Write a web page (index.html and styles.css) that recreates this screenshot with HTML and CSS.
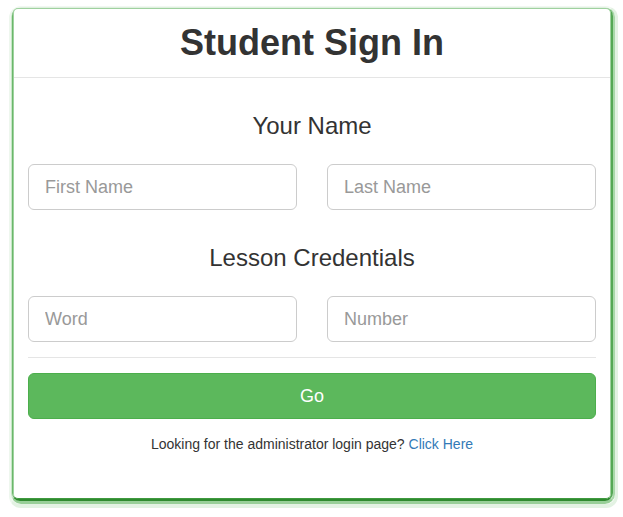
FILE: index.html
```html
<!DOCTYPE html>
<html>
<head>
<meta charset="utf-8">
<link rel="stylesheet" href="styles.css">
</head>
<body>
<div class="glow glow-outer">
  <div class="glow glow-mid">
    <div class="glow glow-inner">
      <div class="card">
        <div class="card-header">
          <h1 class="title">Student Sign In</h1>
        </div>
        <div class="card-body">
          <h3 class="section-title">Your Name</h3>
          <div class="row">
            <input class="field" type="text" placeholder="First Name">
            <input class="field" type="text" placeholder="Last Name">
          </div>
          <h3 class="section-title">Lesson Credentials</h3>
          <div class="row">
            <input class="field" type="text" placeholder="Word">
            <input class="field" type="text" placeholder="Number">
          </div>
          <hr class="divider">
          <button class="go-btn" type="button">Go</button>
          <p class="admin">Looking for the administrator login page? <a class="admin-link" href="#">Click Here</a></p>
        </div>
      </div>
    </div>
  </div>
</div>
</body>
</html>
```
FILE: styles.css
```css
* { box-sizing: border-box; }
html { background: #fff; }
body {
  margin: 6px 5px 0 9px;
  font-family: "Liberation Sans", Arial, sans-serif;
  font-size: 14px;
  line-height: 20px;
  color: #333;
}
.glow { border-style: solid; }
.glow-outer {
  border-width: 1px 3px 4px 2px;
  border-color: #f1f8f1 #e3f2e3 #e3f2e3 #eef7ee;
  border-radius: 12px;
}
.glow-mid {
  border-width: 1px 2px 3px 1px;
  border-color: #e0f0e0 #a9d8a9 #98cf98 #c6e6c6;
  border-radius: 10px;
}
.glow-inner {
  border-width: 0 2px 2px 1px;
  border-color: #6bb86b #55a855 #2f8a2f #6bb86b;
  border-radius: 8px;
}
.card {
  border: 1px solid #9fd19f;
  border-bottom-color: #3f9a3f;
  border-radius: 5px;
  background: #fff;
  height: 491px;
}
.card-header {
  border-bottom: 1px solid #e5e5e5;
  padding: 14px 15px;
  text-align: center;
}
.title {
  margin: 0;
  font-size: 36px;
  line-height: 40px;
  font-weight: bold;
  color: #333;
}
.card-body {
  padding: 0 14px 15px;
}
.section-title {
  margin: 35px 0 25px;
  font-size: 24px;
  line-height: 26px;
  font-weight: 500;
  text-align: center;
  color: #333;
}
.row {
  display: grid;
  grid-template-columns: 1fr 1fr;
  column-gap: 30px;
}
.field {
  height: 46px;
  padding: 10px 16px;
  font-family: "Liberation Sans", Arial, sans-serif;
  font-size: 18px;
  color: #555;
  border: 1px solid #ccc;
  border-radius: 6px;
  background: #fff;
  width: 100%;
}
.field::placeholder { color: #999; }
.divider {
  margin: 15px 0;
  border: 0;
  border-top: 1px solid #e5e5e5;
}
.go-btn {
  display: block;
  width: 100%;
  height: 46px;
  font-family: "Liberation Sans", Arial, sans-serif;
  font-size: 18px;
  color: #fff;
  background: #5cb85c;
  border: 1px solid #4cae4c;
  border-radius: 6px;
}
.admin {
  margin: 15px 0 0;
  text-align: center;
}
.admin-link { color: #337ab7; text-decoration: none; }
```
